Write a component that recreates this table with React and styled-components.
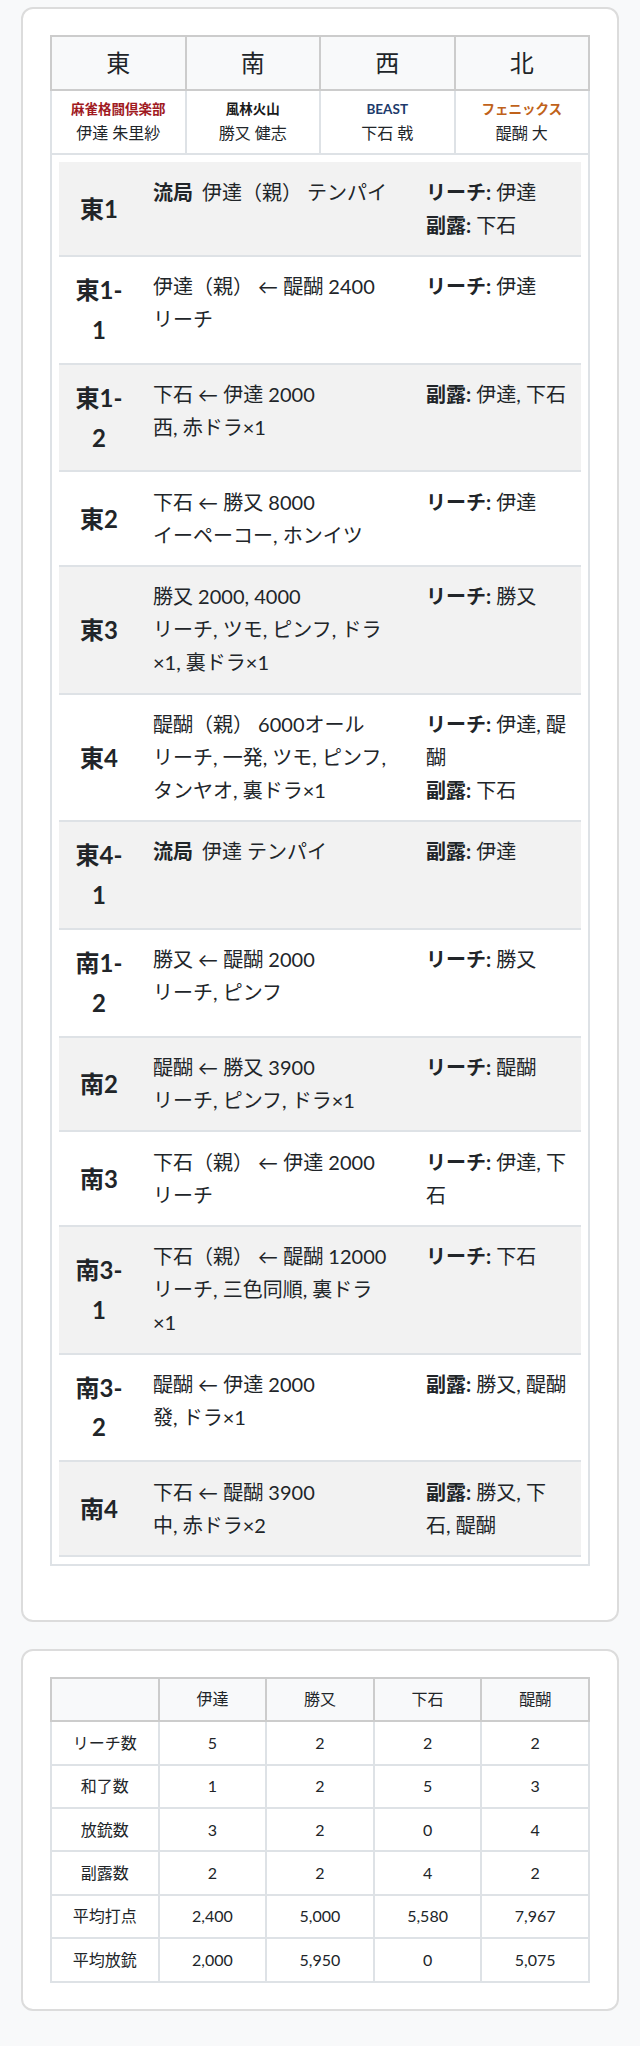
import React from 'react';
import styled, { createGlobalStyle } from 'styled-components';

const GlobalStyle = createGlobalStyle`
  body{
    margin:0;
    background:#f8f9fa;
    color:#212529;
    font-family: Lato, "Noto Sans CJK JP", sans-serif;
    line-height:1.65;
  }
`

const Page = styled.div`
  display:flex;
  flex-direction:column;
  gap:27px;
  padding:7px 21px 42px;
`

const Card = styled.section`
  background:#fff;
  border:2px solid #dcdcdc;
  border-radius:12px;
  padding:26px 27px;
`

const Table = styled.table`
  width:100%;
  border-collapse:collapse;
  table-layout:fixed;
  margin-bottom:${props => props.gapBelow || 0}px;
`

const HeadCell = styled.th`
  border:2px solid #cccccc;
  background:#f8f9fa;
  font-weight:400;
  font-size:${props => props.big ? 24 : 16}px;
  padding:${props => props.big ? '6px' : '7.5px 8px'};
  text-align:center;
`

const Cell = styled.td`
  border:2px solid #dee2e6;
  text-align:center;
  padding:${props => props.tight ? '7px' : '7.5px 8px'};
  font-size:16px;
`

const TeamName = styled.span`
  display:block;
  font-size:13.5px;
  font-weight:700;
  color:${props => props.color};
`

const PlayerName = styled.span`
  display:block;
  font-size:16px;
`

const RoundRow = styled.div`
  display:grid;
  grid-template-columns:80px 273px 1fr;
  background:${props => props.shaded ? '#f2f2f2' : '#fff'};
  border-bottom:2px solid #dee2e6;
  text-align:left;
`

const RoundLabel = styled.div`
  align-self:center;
  text-align:center;
  font-size:24px;
  font-weight:700;
  padding:13.3px 14px;
`

const RoundText = styled.div`
  font-size:20px;
  padding:13.3px ${props => props.wide ? 14 : 20}px 13.3px 14px;

  span{
    display:block;
  }
`

const Kind = styled.strong`
  margin-right:9px;
`

const teams = [
  { wind: '東', team: '麻雀格闘倶楽部', color: '#a01a1f', player: '伊達 朱里紗' },
  { wind: '南', team: '風林火山', color: '#1a1a1a', player: '勝又 健志' },
  { wind: '西', team: 'BEAST', color: '#1d3a6b', player: '下石 戟' },
  { wind: '北', team: 'フェニックス', color: '#c0621a', player: '醍醐 大' },
];

const rounds = [
  { label: '東1', draw: true, lines: ['伊達（親） テンパイ'], calls: [['リーチ', '伊達'], ['副露', '下石']] },
  { label: '東1-1', lines: ['伊達（親） ← 醍醐 2400', 'リーチ'], calls: [['リーチ', '伊達']] },
  { label: '東1-2', lines: ['下石 ← 伊達 2000', '西, 赤ドラ×1'], calls: [['副露', '伊達, 下石']] },
  { label: '東2', lines: ['下石 ← 勝又 8000', 'イーペーコー, ホンイツ'], calls: [['リーチ', '伊達']] },
  { label: '東3', lines: ['勝又 2000, 4000', 'リーチ, ツモ, ピンフ, ドラ×1, 裏ドラ×1'], calls: [['リーチ', '勝又']] },
  { label: '東4', lines: ['醍醐（親） 6000オール', 'リーチ, 一発, ツモ, ピンフ, タンヤオ, 裏ドラ×1'], calls: [['リーチ', '伊達, 醍醐'], ['副露', '下石']] },
  { label: '東4-1', draw: true, lines: ['伊達 テンパイ'], calls: [['副露', '伊達']] },
  { label: '南1-2', lines: ['勝又 ← 醍醐 2000', 'リーチ, ピンフ'], calls: [['リーチ', '勝又']] },
  { label: '南2', lines: ['醍醐 ← 勝又 3900', 'リーチ, ピンフ, ドラ×1'], calls: [['リーチ', '醍醐']] },
  { label: '南3', lines: ['下石（親） ← 伊達 2000', 'リーチ'], calls: [['リーチ', '伊達, 下石']] },
  { label: '南3-1', lines: ['下石（親） ← 醍醐 12000', 'リーチ, 三色同順, 裏ドラ×1'], calls: [['リーチ', '下石']] },
  { label: '南3-2', lines: ['醍醐 ← 伊達 2000', '發, ドラ×1'], calls: [['副露', '勝又, 醍醐']] },
  { label: '南4', lines: ['下石 ← 醍醐 3900', '中, 赤ドラ×2'], calls: [['副露', '勝又, 下石, 醍醐']] },
];

const players = ['伊達', '勝又', '下石', '醍醐'];

const stats = [
  ['リーチ数', '5', '2', '2', '2'],
  ['和了数', '1', '2', '5', '3'],
  ['放銃数', '3', '2', '0', '4'],
  ['副露数', '2', '2', '4', '2'],
  ['平均打点', '2,400', '5,000', '5,580', '7,967'],
  ['平均放銃', '2,000', '5,950', '0', '5,075'],
];

function Round({ round, shaded }){
  return (
    <RoundRow shaded={shaded}>
      <RoundLabel>{round.label}</RoundLabel>
      <RoundText>
        {round.lines.map((line, i) => (
          <span key={i}>
            {round.draw && i === 0 && <Kind>流局</Kind>}
            {line}
          </span>
        ))}
      </RoundText>
      <RoundText wide>
        {round.calls.map(([kind, who]) => (
          <span key={kind}><strong>{kind}:</strong> {who}</span>
        ))}
      </RoundText>
    </RoundRow>
  );
}

export default function App(){
  return (
    <>
      <GlobalStyle />
      <Page>
        <Card>
          <Table gapBelow={28}>
            <thead>
              <tr>
                {teams.map(t => <HeadCell big key={t.wind}>{t.wind}</HeadCell>)}
              </tr>
            </thead>
            <tbody>
              <tr>
                {teams.map(t => (
                  <Cell tight key={t.wind}>
                    <TeamName color={t.color}>{t.team}</TeamName>
                    <PlayerName>{t.player}</PlayerName>
                  </Cell>
                ))}
              </tr>
              <tr>
                <Cell tight colSpan={4}>
                  {rounds.map((r, i) => <Round key={r.label} round={r} shaded={i % 2 === 0} />)}
                </Cell>
              </tr>
            </tbody>
          </Table>
        </Card>
        <Card>
          <Table>
            <thead>
              <tr>
                <HeadCell />
                {players.map(p => <HeadCell key={p}>{p}</HeadCell>)}
              </tr>
            </thead>
            <tbody>
              {stats.map(row => (
                <tr key={row[0]}>
                  {row.map((v, i) => <Cell key={i}>{v}</Cell>)}
                </tr>
              ))}
            </tbody>
          </Table>
        </Card>
      </Page>
    </>
  );
}
